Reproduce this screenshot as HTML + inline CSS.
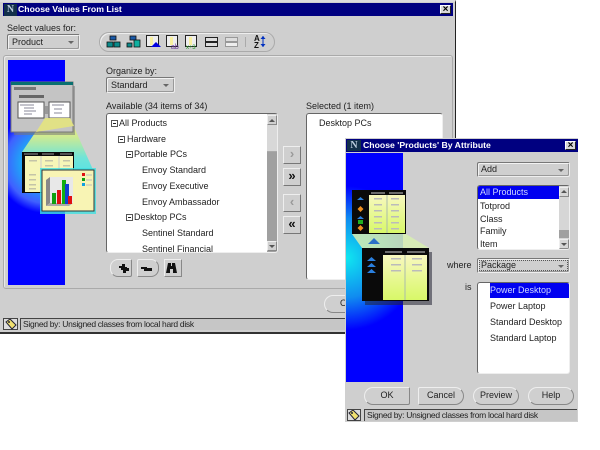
<!DOCTYPE html>
<html><head><meta charset="utf-8"><style>
html,body{margin:0;padding:0;background:#fff;width:600px;height:450px;overflow:hidden}
*{box-sizing:border-box}
body{font-family:"Liberation Sans",sans-serif;font-size:9px;color:#222;position:relative}
.a,.t{position:absolute}
.t{white-space:nowrap;line-height:12px;font-size:9px}
.win{background:#cfcfcf;overflow:hidden}
.title{background:#000080;color:#fff;font-weight:bold;font-size:8.7px;line-height:13px;white-space:nowrap}
.x{background:#d8d8d8;border:1px solid;border-color:#fff #222 #222 #fff;font:bold 10px/8px "Liberation Sans",sans-serif;color:#000;text-align:center}
.n{background:#12304a;color:#bcd;font:bold 10px/13px "Liberation Serif",serif;text-align:center}
.dd{border:1px solid;border-color:#777 #eee #eee #777;border-radius:2px;background:#cfcfcf;box-shadow:inset 1px 1px 0 #f2f2f2,inset -1px -1px 0 #999;line-height:14px;padding-left:4px;font-size:9px;white-space:nowrap}
.dd:after{content:"";position:absolute;right:5px;top:6px;border:3px solid transparent;border-top:3px solid #666;border-bottom:0}
.list{background:#fff;border:1px solid;border-color:#666 #eee #eee #666;border-radius:3px;overflow:hidden}
.btn{background:#cfcfcf;border:1px solid;border-color:#eee #777 #777 #eee;text-align:center;font-weight:bold;color:#111;font-size:13px}
.pb{background:#cfcfcf;border:1px solid;border-color:#eee #888 #888 #eee;text-align:center;line-height:15px;border-radius:9px;font-size:9px}
.pm{width:7px;height:7px;border:1px solid #555;background:#fff;position:absolute}
.pm:after{content:"";position:absolute;left:1px;top:2px;width:3px;height:1px;background:#222}
.st{background:#c6c6c6;border-top:1px solid #444;border-left:1px solid #444;font-size:8.5px;letter-spacing:-.3px;line-height:11px;padding-left:2px;white-space:nowrap}
</style></head><body>

<!-- MAIN WINDOW -->
<div class="a win" style="left:0;top:0;width:456px;height:334px;border-right:1px solid #222;border-bottom:2px solid #333;border-top:2px solid #ddd">
  <div class="a title" style="left:3px;top:1px;width:450px;height:13px;padding-left:15px">Choose Values From List</div>
  <div class="a n" style="left:4px;top:2px;width:13px;height:12px;line-height:12px">N</div>
  <div class="a x" style="left:440px;top:3px;width:11px;height:9px">×</div>

  <div class="t" style="left:7px;top:20px">Select values for:</div>
  <div class="a dd" style="left:7px;top:32px;width:73px;height:16px">Product</div>

  <div class="a" style="left:99px;top:30px;width:176px;height:20px;border:1px solid #aaa;border-radius:10px;box-shadow:inset 1px 1px 0 #eee"></div>
  <svg class="a" style="left:105px;top:31px" width="170" height="18" viewBox="0 0 170 18">
    <g stroke="#111" stroke-width=".8"><rect x="5" y="3" width="6" height="4" fill="#1a5aa8"/><rect x="2" y="9" width="6" height="5" fill="#0a8a8a"/><rect x="9" y="9" width="6" height="5" fill="#0a8a8a"/></g>
    <g stroke="#111" stroke-width=".8"><rect x="25" y="3" width="6" height="4" fill="#1a5aa8"/><rect x="22" y="10" width="5" height="4" fill="#0a8a8a"/><rect x="29" y="7" width="6" height="7" fill="#10b0a0"/></g>
    <rect x="41.500" y="2.500" width="12" height="11" fill="#eee" stroke="#222"/><rect x="45" y="4" width="3" height="8" fill="#f8f0a0"/><path d="M46 14l5-5 5 5z" fill="#0000e0"/>
    <rect x="61.500" y="2.500" width="11" height="11" fill="#eee" stroke="#222"/><rect x="65" y="4" width="3" height="8" fill="#f8f0a0"/><text x="66" y="16" font-family="Liberation Sans" font-size="7" fill="#6a3a9a">ab</text>
    <rect x="80.500" y="2.500" width="11" height="11" fill="#eee" stroke="#222"/><rect x="84" y="4" width="3" height="8" fill="#f8f0a0"/><text x="81" y="16" font-family="Liberation Sans" font-size="6" fill="#2a9a2a">x÷3</text>
    <rect x="100.500" y="4.500" width="12" height="4" fill="#ddd" stroke="#222"/><rect x="100.500" y="9.500" width="12" height="4" fill="#ddd" stroke="#222"/>
    <rect x="120.500" y="4.500" width="12" height="4" fill="#ddd" stroke="#999"/><rect x="120.500" y="9.500" width="12" height="4" fill="#eee" stroke="#999"/>
    <rect x="140" y="4" width="1" height="10" fill="#aaa"/>
    <text x="149" y="8" font-family="Liberation Sans" font-size="8" font-weight="bold" fill="#111">A</text><text x="149" y="15" font-family="Liberation Sans" font-size="8" font-weight="bold" fill="#111">Z</text>
    <path d="M158 3v11" stroke="#0030c0"/><path d="M155.500 6l2.500-3 2.500 3zM155.500 11l2.500 3 2.500-3z" fill="#0030c0"/>
  </svg>

  <!-- panel -->
  <div class="a" style="left:3px;top:53px;width:450px;height:234px;border:1px solid #aaa;border-radius:3px;box-shadow:inset 1px 1px 0 #e8e8e8"></div>

  <!-- left graphic -->
  <svg class="a" style="left:0;top:0" width="110" height="300" viewBox="0 2 110 300">
    <defs>
      <radialGradient id="g1" gradientUnits="userSpaceOnUse" cx="45" cy="163" r="50"><stop offset="0" stop-color="#30f0f0"/><stop offset=".5" stop-color="#20a0f8"/><stop offset=".8" stop-color="#4060ff"/><stop offset="1" stop-color="#0000ff"/></radialGradient>
      <linearGradient id="cone" x1="0" y1="0" x2="0" y2="1"><stop offset="0" stop-color="#f0f080"/><stop offset=".25" stop-color="#d0ea90"/><stop offset=".55" stop-color="#70e4d8"/><stop offset="1" stop-color="#40e0f0"/></linearGradient>
    </defs>
    <rect x="8" y="60" width="57" height="225" fill="#0000ff"/>
    <rect x="8" y="110" width="57" height="105" fill="url(#g1)"/>
    <path d="M45 118H70L94 172V190H30L22 152z" fill="url(#cone)"/>
    <rect x="14" y="86" width="61" height="49" fill="#777" opacity=".55"/>
    <rect x="11" y="82" width="62" height="50" fill="#c4c4c4" stroke="#777"/>
    <rect x="11" y="82" width="62" height="3" fill="#0a7070"/>
    <rect x="14" y="87" width="22" height="3" fill="#777"/>
    <rect x="19" y="95" width="25" height="3" fill="#666"/>
    <rect x="18" y="102" width="26" height="16" fill="#fff" stroke="#555"/>
    <rect x="49" y="102" width="21" height="16" fill="#fff" stroke="#555"/>
    <path d="M20 105h14M24 108h10M24 111h12M24 114h8M52 105h12M54 109h8M54 113h8" stroke="#889"/>
    <rect x="45" y="106" width="3" height="8" fill="#999"/>
    <path d="M45 118H70L74 126 36 132z" fill="#e4e480" opacity=".9"/>
    <rect x="22" y="152" width="52" height="41" fill="#0a0a0a"/>
    <rect x="25" y="156" width="48" height="36" fill="#f6f6b8"/>
    <path d="M24 154h14M42 154h12M60 154h12" stroke="#999"/>
    <path d="M41 156v36M59 156v36" stroke="#ccc"/>
    <g fill="#c4c4a8"><rect x="29" y="160" width="8" height="1.500"/><rect x="45" y="160" width="8" height="1.500"/><rect x="63" y="160" width="7" height="1.500"/><rect x="45" y="165" width="8" height="1.500"/><rect x="63" y="165" width="7" height="1.500"/><rect x="29" y="174" width="7" height="1.500"/><rect x="29" y="179" width="7" height="1.500"/><rect x="29" y="184" width="7" height="1.500"/><rect x="29" y="188" width="7" height="1.500"/></g>
    <rect x="40" y="168" width="56" height="46" fill="#40e0e0" opacity=".8"/>
    <rect x="42" y="170" width="52" height="41" fill="#f8f4b4" stroke="#333"/>
    <path d="M46 180l4-3v26l-4 3z" fill="#888"/><path d="M50 177h23v26H50z" fill="#e8e8e8"/><path d="M46 206l4-3h23l-4 3z" fill="#aaa"/>
    <rect x="52" y="193" width="4" height="11" fill="#10a010"/><rect x="57" y="190" width="4" height="14" fill="#e01010"/><rect x="62" y="180" width="4" height="24" fill="#10b010"/><rect x="65" y="184" width="4" height="20" fill="#1040d0"/><rect x="68" y="196" width="4" height="8" fill="#e01010"/>
    <rect x="82" y="173" width="3" height="3" fill="#e01010"/><rect x="82" y="178" width="3" height="3" fill="#10a010"/><rect x="82" y="183" width="3" height="3" fill="#10a0e0"/>
    <path d="M86 175h6M86 180h6M86 185h6" stroke="#bbb"/>
  </svg>

  <div class="t" style="left:106px;top:63px">Organize by:</div>
  <div class="a dd" style="left:106px;top:75px;width:69px;height:16px">Standard</div>

  <div class="t" style="left:106px;top:98px">Available (34 items of 34)</div>
  <div class="a list" style="left:106px;top:111px;width:172px;height:140px">
    <div class="a" style="left:160px;top:0;width:11px;height:138px;background:#a0a0a0"></div>
    <div class="a" style="left:160px;top:0;width:11px;height:38px;background:#d8d8d8;border-bottom:1px solid #aaa"></div>
    <div class="a" style="left:160px;top:1px;width:10px;height:10px;background:#d0d0d0;border:1px solid;border-color:#eee #888 #888 #eee"></div>
    <div class="a" style="left:162px;top:5px;border:3px solid transparent;border-bottom:3px solid #555;border-top:0"></div>
    <div class="a" style="left:160px;top:127px;width:10px;height:10px;background:#d0d0d0;border:1px solid;border-color:#eee #888 #888 #eee"></div>
    <div class="a" style="left:162px;top:131px;border:3px solid transparent;border-top:3px solid #555;border-bottom:0"></div>
    <div class="pm" style="left:4px;top:6px"></div><div class="t" style="left:12px;top:3px">All Products</div>
    <div class="pm" style="left:11px;top:22px"></div><div class="t" style="left:20px;top:19px">Hardware</div>
    <div class="pm" style="left:19px;top:37px"></div><div class="t" style="left:27px;top:34px">Portable PCs</div>
    <div class="t" style="left:35px;top:50px">Envoy Standard</div>
    <div class="t" style="left:35px;top:66px">Envoy Executive</div>
    <div class="t" style="left:35px;top:82px">Envoy Ambassador</div>
    <div class="pm" style="left:19px;top:100px"></div><div class="t" style="left:27px;top:97px">Desktop PCs</div>
    <div class="t" style="left:35px;top:113px">Sentinel Standard</div>
    <div class="t" style="left:35px;top:129px">Sentinel Financial</div>
  </div>

  <div class="a" style="left:110px;top:257px;width:22px;height:18px;border:1px solid;border-color:#eee #888 #888 #eee;border-radius:8px 2px 2px 8px"></div>
  <div class="a" style="left:137px;top:257px;width:22px;height:18px;border:1px solid;border-color:#eee #888 #888 #eee;border-radius:2px 8px 8px 2px"></div>
  <div class="a" style="left:164px;top:257px;width:18px;height:18px;border:1px solid;border-color:#eee #888 #888 #eee"></div>
  <svg class="a" style="left:110px;top:257px" width="75" height="18" viewBox="0 0 75 18">
    <path d="M12 5h3v3h2v1h2v3h-3v2h-3v-3h-2v-2H9V7h3z" fill="#111"/>
    <path d="M31 8h6v1h5v3h-8v-2h-3z" fill="#111"/>
    <path d="M58 4h3v3h1V4h3l2 10h-4V10h-3v4h-4z" fill="#111"/>
  </svg>

  <div class="a btn" style="left:283px;top:144px;width:18px;height:18px;line-height:14px;color:#999">›</div>
  <div class="a btn" style="left:283px;top:166px;width:18px;height:18px;line-height:14px">»</div>
  <div class="a btn" style="left:283px;top:192px;width:18px;height:18px;line-height:14px;color:#999">‹</div>
  <div class="a btn" style="left:283px;top:214px;width:18px;height:18px;line-height:14px">«</div>

  <div class="t" style="left:306px;top:98px">Selected (1 item)</div>
  <div class="a list" style="left:306px;top:111px;width:137px;height:167px">
    <div class="t" style="left:12px;top:3px">Desktop PCs</div>
  </div>

  <div class="a pb" style="left:324px;top:293px;width:45px;height:18px">OK</div>

  <!-- status -->
  <div class="a" style="left:3px;top:316px;width:15px;height:12px;border:1px solid #444;background:#ddd"></div>
  <svg class="a" style="left:5px;top:317px" width="12" height="11" viewBox="0 0 12 11"><path d="M1 3l4-3 6 6-4 4z" fill="#f0e070" stroke="#223"/><circle cx="4" cy="3" r="1" fill="#223"/></svg>
  <div class="a st" style="left:20px;top:316px;width:432px;height:12px">Signed by: Unsigned classes from local hard disk</div>
</div>

<!-- SECOND WINDOW -->
<div class="a win" style="left:345px;top:138px;width:233px;height:284px">
  <div class="a title" style="left:1px;top:1px;width:232px;height:13px;padding-left:17px">Choose 'Products' By Attribute</div>
  <div class="a n" style="left:2px;top:2px;width:14px;height:11px;line-height:11px">N</div>
  <div class="a x" style="left:220px;top:3px;width:11px;height:9px">×</div>

  <svg class="a" style="left:0;top:0" width="100" height="250" viewBox="345 138 100 250">
    <defs>
      <radialGradient id="g2" gradientUnits="userSpaceOnUse" cx="346" cy="258" r="72"><stop offset="0" stop-color="#10e8f0"/><stop offset=".55" stop-color="#108cf0"/><stop offset="1" stop-color="#0000ff"/></radialGradient>
      <linearGradient id="y1" x1="0" y1="0" x2="0" y2="1"><stop offset="0" stop-color="#f8f8c0"/><stop offset="1" stop-color="#d8f868"/></linearGradient>
    </defs>
    <rect x="346" y="153" width="57" height="229" fill="#0000ff"/>
    <rect x="346" y="153" width="57" height="229" fill="url(#g2)"/>
    <path d="M352 234L406 234 429 248 362 248z" fill="#d8f0b0" opacity=".85"/>
    <path d="M368 244l6-6 6 6z" fill="#2a70c8"/>
    <rect x="352" y="190" width="54" height="44" fill="#0a0a0a"/>
    <rect x="369" y="195" width="36" height="38" fill="url(#y1)"/>
    <path d="M371 193h14M389 193h14" stroke="#ccc"/>
    <path d="M387 195v38" stroke="#aba"/>
    <g fill="#bbb"><rect x="374" y="198" width="8" height="1.500"/><rect x="391" y="198" width="8" height="1.500"/><rect x="374" y="204" width="8" height="1.500"/><rect x="391" y="204" width="8" height="1.500"/><rect x="374" y="210" width="8" height="1.500"/><rect x="391" y="210" width="8" height="1.500"/><rect x="374" y="216" width="8" height="1.500"/><rect x="391" y="216" width="8" height="1.500"/><rect x="374" y="222" width="8" height="1.500"/><rect x="391" y="222" width="8" height="1.500"/><rect x="374" y="228" width="8" height="1.500"/><rect x="391" y="228" width="8" height="1.500"/></g>
    <path d="M357 200l3.500-3 3.500 3zM357 219l3.500-3 3.500 3z" fill="#2a80e0"/>
    <path d="M360.500 206l3 3-3 3-3-3zM360.500 225l3 3-3 3-3-3z" fill="#f09020"/>
    <rect x="358" y="220" width="5" height="4" fill="#20b020"/>
    <rect x="365" y="252" width="67" height="53" fill="#223" opacity=".55"/>
    <rect x="362" y="248" width="67" height="53" fill="#0a0a0a"/>
    <rect x="383" y="255" width="44" height="45" fill="url(#y1)"/>
    <path d="M385 252h17M407 252h18" stroke="#ccc"/><path d="M405 255v45" stroke="#aba"/>
    <g fill="#bbb"><rect x="391" y="258" width="10" height="1.500"/><rect x="412" y="258" width="10" height="1.500"/><rect x="391" y="264" width="10" height="1.500"/><rect x="412" y="264" width="10" height="1.500"/><rect x="391" y="270" width="10" height="1.500"/><rect x="412" y="270" width="10" height="1.500"/></g>
    <path d="M367 261l4.500-4 4.500 4zM367 267l4.500-4 4.500 4zM367 273l4.500-4 4.500 4z" fill="#2a80e0"/>
  </svg>

  <div class="a dd" style="left:132px;top:24px;width:93px;height:15px;line-height:13px;padding-left:3px">Add</div>

  <div class="a list" style="left:132px;top:47px;width:93px;height:65px">
    <div class="a" style="left:0;top:0;width:81px;height:13px;background:#0000f0;color:#cfd8ff;line-height:13px;padding-left:2px">All Products</div>
    <div class="t" style="left:2px;top:14px">Totprod</div>
    <div class="t" style="left:2px;top:27px">Class</div>
    <div class="t" style="left:2px;top:39px">Family</div>
    <div class="t" style="left:2px;top:52px">Item</div>
    <div class="a" style="left:81px;top:0;width:11px;height:63px;background:#d6d6d6"></div>
    <div class="a" style="left:81px;top:1px;width:10px;height:10px;border:1px solid;border-color:#eee #888 #888 #eee"></div>
    <div class="a" style="left:83px;top:4px;border:3px solid transparent;border-bottom:3px solid #555;border-top:0"></div>
    <div class="a" style="left:81px;top:44px;width:10px;height:8px;background:#a0a0a0"></div>
    <div class="a" style="left:81px;top:53px;width:10px;height:10px;border:1px solid;border-color:#eee #888 #888 #eee"></div>
    <div class="a" style="left:83px;top:57px;border:3px solid transparent;border-top:3px solid #555;border-bottom:0"></div>
  </div>

  <div class="t" style="left:102px;top:121px">where</div>
  <div class="a dd" style="left:132px;top:120px;width:93px;height:15px;line-height:13px;padding-left:3px;outline:1px dotted #555;outline-offset:-3px">Package</div>

  <div class="t" style="left:120px;top:143px">is</div>
  <div class="a list" style="left:132px;top:144px;width:93px;height:92px">
    <div class="a" style="left:12px;top:0;width:80px;height:15px;background:#0000f0;color:#cfd8ff;line-height:15px">Power Desktop</div>
    <div class="t" style="left:12px;top:17px">Power Laptop</div>
    <div class="t" style="left:12px;top:33px">Standard Desktop</div>
    <div class="t" style="left:12px;top:49px">Standard Laptop</div>
  </div>

  <div class="a pb" style="left:19px;top:249px;width:46px;height:18px;border-radius:9px 2px 2px 9px">OK</div>
  <div class="a pb" style="left:73px;top:249px;width:46px;height:18px;border-radius:2px 9px 9px 2px">Cancel</div>
  <div class="a pb" style="left:128px;top:249px;width:46px;height:18px">Preview</div>
  <div class="a pb" style="left:183px;top:249px;width:46px;height:18px">Help</div>

  <div class="a" style="left:2px;top:271px;width:14px;height:12px;border:1px solid #444;background:#ddd"></div>
  <svg class="a" style="left:3px;top:272px" width="12" height="11" viewBox="0 0 12 11"><path d="M1 3l4-3 6 6-4 4z" fill="#f0e070" stroke="#223"/><circle cx="4" cy="3" r="1" fill="#223"/></svg>
  <div class="a st" style="left:19px;top:271px;width:213px;height:12px">Signed by: Unsigned classes from local hard disk</div>
</div>
</body></html>
